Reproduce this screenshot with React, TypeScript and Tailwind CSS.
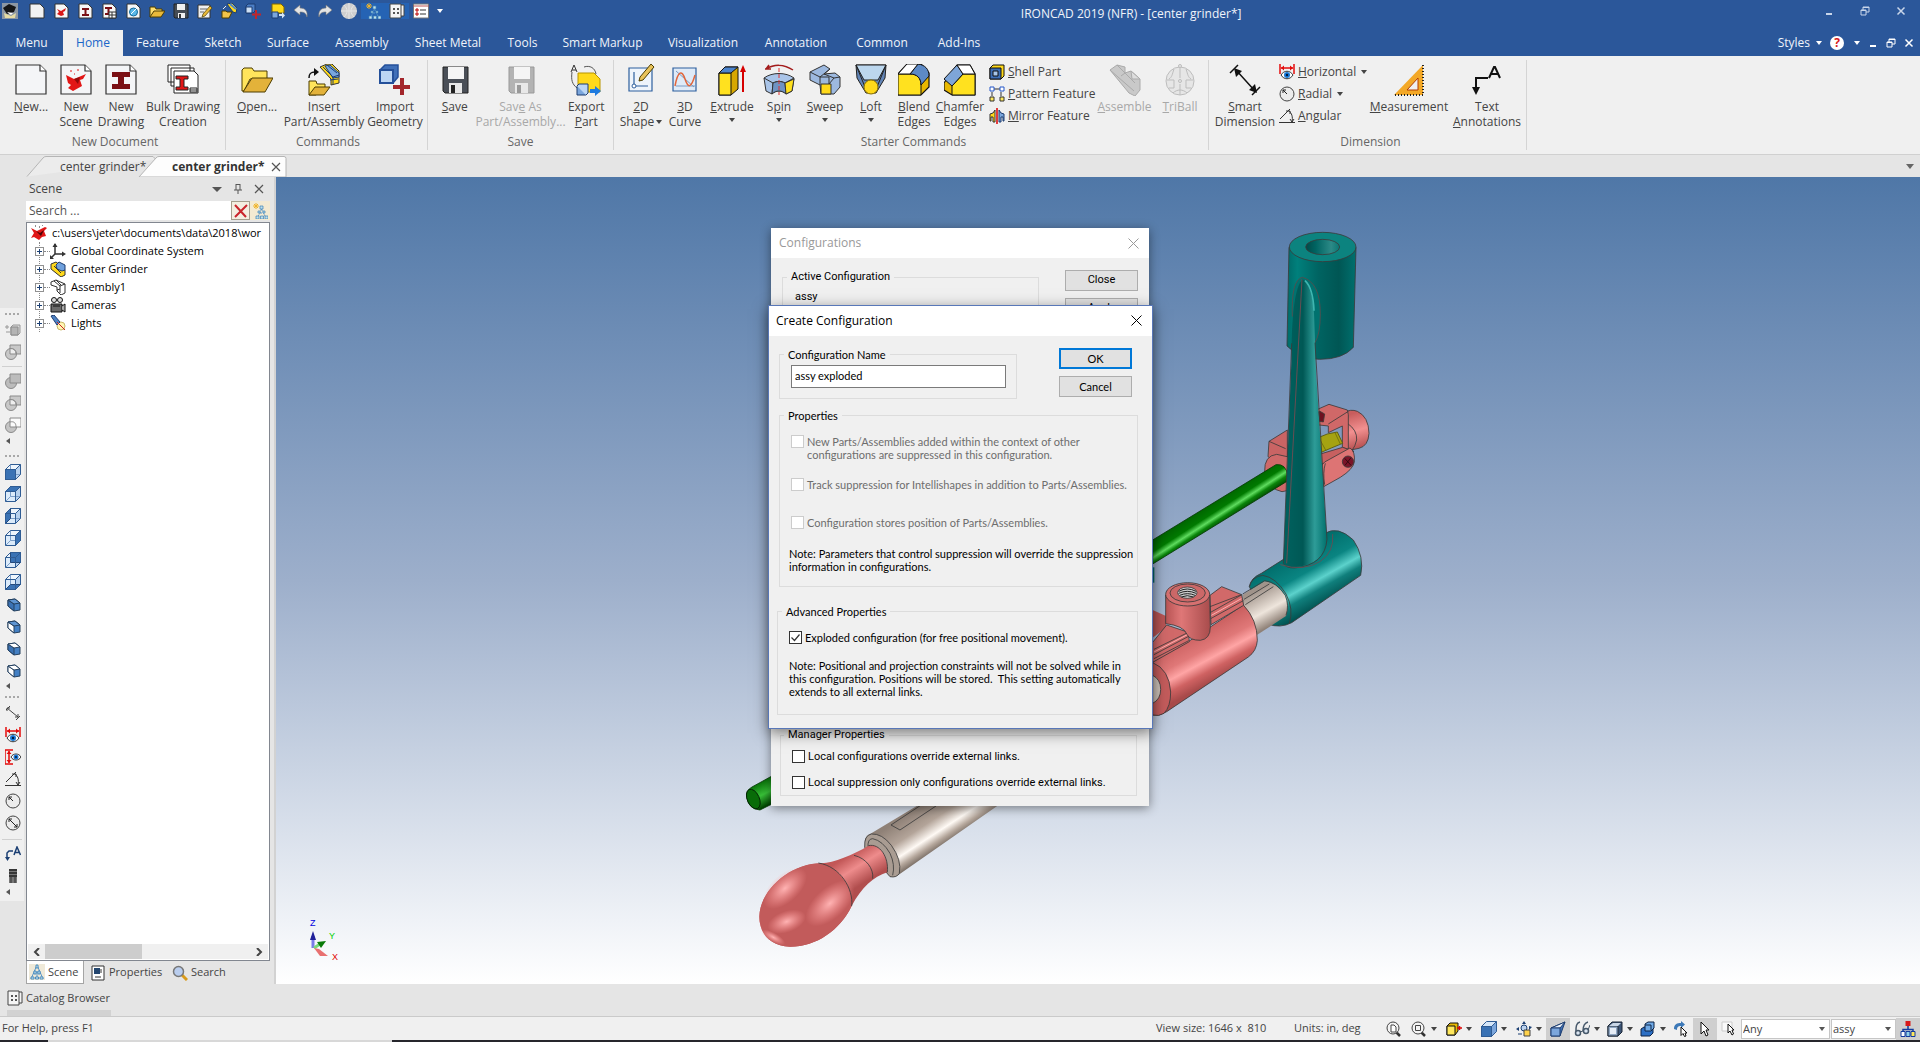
import { useState } from 'react';
import type { ReactNode } from 'react';
import { clsx } from 'clsx';

type IconProps = { children: ReactNode; box?: number; className?: string };

function Svg({ children, box = 16, className = 'size-4' }: IconProps) {
  return (
    <svg viewBox={`0 0 ${box} ${box}`} className={clsx('shrink-0', className)} aria-hidden="true">
      {children}
    </svg>
  );
}

function Caret({ className = 'text-[#444]' }: { className?: string }) {
  return (
    <svg viewBox="0 0 6 4" className={clsx('h-1 w-1.5 shrink-0', className)} aria-hidden="true">
      <path d="M0 0h6L3 4z" fill="currentColor" />
    </svg>
  );
}

/* ---------- small 16px glyphs ---------- */

const page = <path d="M2 1h9l4 4v10H2z" fill="#f7f7f7" stroke="#333" />;

const glyphs: Record<string, ReactNode> = {
  app: (
    <>
      <path d="M0 0h16v16H0z" fill="#8d97a3" />
      <path d="M1 5l6-4 7 3-2 5-7 2z" fill="#151515" />
      <path d="M2 10l7 3 5-3-1 5H3z" fill="#e6dca4" />
      <path d="M5 9l6 1-2 2z" fill="#fff" />
    </>
  ),
  page: <path d="M1 1h10l4 4v10H1z" fill="#f2f2f2" stroke="#333" />,
  scene: (
    <>
      {page}
      <path d="M4 6l4 2 5-3-1 3-2 1 1 3-3 1-4-2 2-2z" fill="#d81818" />
    </>
  ),
  drawing: (
    <>
      {page}
      <path d="M5 5h7v2H9.500v4H12v2H5v-2h2.500V7H5z" fill="#7b1015" />
    </>
  ),
  drawings: (
    <>
      {page}
      <path d="M4 4h7v2H8.500v4H11v2H4v-2h2.500V6H4z" fill="#7b1015" />
      <path d="M8 9h7v6H8z" fill="#fff" stroke="#333" />
      <path d="M8 12h7M11 9v6" stroke="#333" />
    </>
  ),
  globe: (
    <>
      {page}
      <circle cx="8.500" cy="9" r="4" fill="#5bb8e8" stroke="#14699b" />
      <path d="M6 11l6-6" stroke="#fff" />
    </>
  ),
  folder: (
    <>
      <path d="M1 4h5l1 2h6v3H5l-3 5H1z" fill="#ffe070" stroke="#4d3d00" />
      <path d="M5 8h11l-4 6H1z" fill="#e9b93a" stroke="#4d3d00" />
    </>
  ),
  disk: (
    <>
      <path d="M1 1h14v14H2l-1-1z" fill="#454c55" stroke="#222" />
      <path d="M4 1h8v6H4zM5 10h7v5H5z" fill="#f0f0f0" />
      <path d="M6 11h2v4H6z" fill="#333" />
    </>
  ),
  edit: (
    <>
      <path d="M1 2h12v13H1z" fill="#f0f0f0" stroke="#333" />
      <path d="M3 6h7M3 9h4" stroke="#666" />
      <path d="M6 11l7-8 2 2-7 8-3 1z" fill="#e9b93a" stroke="#4d3d00" strokeWidth=".7" />
    </>
  ),
  insert: (
    <>
      <path d="M6 1l5-1 5 5-1 5-3-1z" fill="#ffd91a" stroke="#1d3d70" />
      <path d="M9 1l6 5" stroke="#4c84cc" strokeWidth="2" />
      <path d="M1 8h4l1 1h5l-3 6H1z" fill="#f2c44a" stroke="#4d3d00" />
      <path d="M2 6l3-3" stroke="#eee" />
    </>
  ),
  import: (
    <>
      <path d="M1 3l2-2h7v7l-2 2H1z" fill="#4c7fc6" stroke="#1d3d70" />
      <path d="M1 4h6v6H1z" fill="#cfe0f5" stroke="#1d3d70" />
      <path d="M11 7v9M7 11.500h9" stroke="#c0272d" strokeWidth="2" />
    </>
  ),
  export: (
    <>
      <path d="M3 1h9l3 3v6H3z" fill="#ffd91a" stroke="#806600" />
      <path d="M3 9h6v6H3z" fill="#7ba6dc" stroke="#1d3d70" />
      <path d="M10 11h3V9l3 3.500-3 3V13h-3z" fill="#d5e4f7" />
    </>
  ),
  undo: <path d="M7 2L1 7l6 5V9c4 0 6 1 7 5 1-6-2-9-7-9z" fill="#e4e4e4" stroke="#777" strokeWidth=".6" />,
  redo: <path d="M9 2l6 5-6 5V9c-4 0-6 1-7 5-1-6 2-9 7-9z" fill="#e4e4e4" stroke="#777" strokeWidth=".6" />,
  ball: (
    <>
      <circle cx="8" cy="8" r="8" fill="#cfcfcf" />
      <path d="M8 0v16M0 8h16M3 2c4 4 4 8 0 12M13 2c-4 4-4 8 0 12" stroke="#e6e6e6" fill="none" />
    </>
  ),
  tree: (
    <>
      <path d="M4 0v6M1 3h6M2 1l4 4M6 1L2 5" stroke="#f0b429" />
      <path d="M9.500 6L6 14M9.500 6l4 8M8 10h4" stroke="#5a97c8" fill="none" strokeDasharray="2 1" />
      <path d="M8 3h3v3H8zM6 8h2v2H6zM11 8h2v2h-2zM4 13h3v3H4zM8.500 13h3v3h-3zM13 13h3v3h-3z" fill="#bfe0ea" stroke="#3d81b8" strokeWidth=".7" />
    </>
  ),
  pyramid: (
    <>
      <path d="M8 1L2 15M8 1l6 14M5 8h6M8 8v7" stroke="#5a97c8" fill="none" />
      <path d="M7 1h2v3H7zM5 7h2v3H5zM9 7h2v3H9zM2 13h3v2H2zM6.500 13h3v2h-3zM11 13h3v2h-3z" fill="#d6ebef" stroke="#2f79b5" strokeWidth=".8" />
    </>
  ),
  catalog: (
    <>
      <path d="M1 1h11v14H1zM12 2h3v11h-3" fill="#f5f5f5" stroke="#444" />
      <path d="M4 5h2v2H4zM8 5h2v2H8zM4 9h2v2H4zM8 9h2v2H8z" fill="#555" />
    </>
  ),
  list: (
    <>
      <path d="M.5 1h15v14H.5z" fill="#fff" stroke="#777" />
      <path d="M.5 3h15" stroke="#b55" />
      <path d="M3 6h2v2H3zM3 10h2v2H3z" fill="none" stroke="#b00" />
      <path d="M7 7h6M7 11h6" stroke="#333" />
    </>
  ),
  shell: (
    <>
      <path d="M1 4l3-3h11v11l-3 3H1z" fill="#ffd91a" stroke="#111" />
      <path d="M1 4h11v11H1z" fill="#3d6eb4" stroke="#111" />
      <path d="M4 7h5v5H4z" fill="#a9c7ea" stroke="#111" />
    </>
  ),
  pattern: (
    <>
      <path d="M5 3h6M3 6v4M12 6v4" stroke="#333" />
      <path d="M1 1h4v4H1zM11 1h4v4h-4z" fill="#fff" stroke="#2456c8" />
      <path d="M1 11h4v4H1zM11 11h4v4h-4z" fill="#ffe85c" stroke="#333" />
    </>
  ),
  mirror: (
    <>
      <path d="M6 2v12H4V9H2v4H1V6l3-1z" fill="#ffd91a" stroke="#333" />
      <path d="M10 2v12h2V9h2v4h1V6l-3-1z" fill="#7ba6dc" stroke="#1d3d70" />
      <path d="M8 0v16" stroke="#d00" strokeWidth="1.500" />
    </>
  ),
  horizontal: (
    <>
      <path d="M1 0v10M15 0v10M2 4h12" stroke="#e30b0b" strokeWidth="1.500" />
      <path d="M5 1.500L2 4l3 2.500zM11 1.500L14 4l-3 2.500z" fill="#e30b0b" />
      <path d="M2 11c3-5 9-5 12 0-3 5-9 5-12 0z" fill="#fff" stroke="#333" />
      <circle cx="8" cy="11" r="3" fill="#1979d6" />
      <circle cx="8" cy="11" r="1.200" fill="#001a3c" />
    </>
  ),
  vertical: (
    <>
      <path d="M0 1h8M0 15h8M4 2v12M0 1v14" stroke="#e30b0b" strokeWidth="1.500" />
      <path d="M1.500 5L4 2l2.500 3zM1.500 11L4 14l2.500-3z" fill="#e30b0b" />
      <path d="M6 8c2-4 8-4 10 0-2 4-8 4-10 0z" fill="#fff" stroke="#333" />
      <circle cx="11" cy="8" r="2.500" fill="#1979d6" />
      <circle cx="11" cy="8" r="1" fill="#001a3c" />
    </>
  ),
  radial: (
    <>
      <circle cx="8" cy="8" r="7" fill="#ececec" stroke="#444" />
      <path d="M8 8L4 4m0 3V4h3" stroke="#222" fill="none" />
    </>
  ),
  diameter: (
    <>
      <circle cx="8" cy="8" r="7" fill="#ececec" stroke="#444" />
      <path d="M4 4l8 8M4 7V4h3M12 9v3H9" stroke="#222" fill="none" />
    </>
  ),
  angular: <path d="M0 14.500h16M1 11L11 1M9 2c4 3 5 7 4 12M7 3h4v3M11 11l2 3 2-3" stroke="#333" fill="none" />,
  smart: <path d="M2 3l11 9M1 5l4-4M11 15l4-4M2 6V3h3M13 9v3h-3" stroke="#444" fill="none" />,
  textNote: (
    <>
      <path d="M2 12V7l2-2h4" stroke="#1b3f73" strokeWidth="1.500" fill="none" />
      <path d="M0 11h5l-2.500 4z" fill="#1b3f73" />
      <path d="M9 9l3-8 3.500 8M10.500 6.500h4" stroke="#1b3f73" strokeWidth="1.500" fill="none" />
    </>
  ),
  bolt: (
    <>
      <path d="M4 1h8v14H4z" fill="#777" />
      <path d="M4 2h8M4 5h8M4 8h8" stroke="#222" strokeWidth="1.500" />
      <path d="M6 9v6M10 9v6" stroke="#333" />
    </>
  ),
  sizeBox: (
    <>
      <path d="M0 5h4M2 3v4M1 10h4" stroke="#999" />
      <path d="M6 5l2-2h7v8l-2 2H6z" fill="#d8d8d8" stroke="#999" />
      <path d="M6 5h7v8H6z" fill="#b4b4b4" stroke="#8a8a8a" />
    </>
  ),
  union: (
    <>
      <circle cx="6" cy="10" r="5.500" fill="#bcbcbc" stroke="#8a8a8a" />
      <path d="M5 1h11v9H5z" fill="#bcbcbc" stroke="#8a8a8a" />
    </>
  ),
  subtract: (
    <>
      <path d="M5 1h11v9H5z" fill="#c8c8c8" stroke="#8a8a8a" />
      <circle cx="6" cy="10" r="5.500" fill="#c8c8c8" stroke="#8a8a8a" />
      <path d="M5 4.500q6 0 6 5.500H5z" fill="#eee" stroke="#8a8a8a" />
    </>
  ),
  intersect: (
    <>
      <circle cx="6" cy="10" r="5.500" fill="#c4c4c4" stroke="#8a8a8a" />
      <path d="M5 1h11v9H5z" fill="#fbfbfb" stroke="#8a8a8a" />
      <path d="M5 5c4-1 6 1 6 5" fill="none" stroke="#8a8a8a" />
    </>
  ),
  root: (
    <>
      <path d="M0 3l6 3 8-4 2 1-3 3 2 5-4 1-3 3-5-3-3 1 3-5z" fill="#e01616" />
      <path d="M5 6l4 2 4-3-3 6z" fill="#4b0404" />
      <path d="M4 1h1M11 0h1M8 2h1" stroke="#222" />
    </>
  ),
  axes: (
    <>
      <path d="M5 1v10h9M5 11l-4 4" stroke="#333" strokeWidth="1.500" fill="none" />
      <path d="M2.500 4L5 0l2.500 4zM12 8.500l4 2.500-4 2.500zM0 12v4h4z" fill="#333" />
    </>
  ),
  asmColor: (
    <>
      <path d="M1 3l5-2 4 3v3l5 2v5l-4 2-10-8z" fill="#ffd91a" stroke="#333" />
      <path d="M6 4l3-3 6 3v5l-3 1-5-2z" fill="#6fa0dd" stroke="#1d3d70" />
      <path d="M4 5l7 7" stroke="#333" />
    </>
  ),
  asm: (
    <>
      <path d="M1 3l5-2 9 4v9l-4 2-4-4V8L1 6z" fill="#fff" stroke="#333" />
      <path d="M4 2l6 5v7M6 1l5 5M10 7l5-2M7 11l3-1" fill="none" stroke="#333" />
    </>
  ),
  camera: (
    <>
      <circle cx="4" cy="3" r="2.500" fill="#ddd" stroke="#111" />
      <circle cx="10" cy="3" r="2.500" fill="#ddd" stroke="#111" />
      <path d="M1 7h11v8H1z" fill="#6a6a6a" stroke="#111" />
      <path d="M3 9h7M12 9l3-2v8l-3-2" stroke="#111" fill="#aaa" />
    </>
  ),
  light: (
    <>
      <circle cx="11" cy="11" r="4" fill="#fff6b3" stroke="#c9b96a" />
      <path d="M1 1l3-1 6 7-3 3z" fill="#4f83c4" stroke="#1d3d70" />
      <path d="M7 7l8 8" stroke="#c22" />
    </>
  ),
  props: (
    <>
      <path d="M2 1h12v14H2z" fill="#fff" stroke="#333" />
      <path d="M4 3h6v6H4z" fill="#24466f" />
      <path d="M5 12h6M11 4v4" stroke="#333" />
    </>
  ),
  search: (
    <>
      <path d="M10 10l5 5" stroke="#d89a1c" strokeWidth="3" />
      <circle cx="6.500" cy="6.500" r="5" fill="#b9cdee" stroke="#777" strokeWidth="1.500" />
    </>
  ),
  zoomPage: (
    <>
      <path d="M10 11l4 4" stroke="#333" strokeWidth="2.500" />
      <circle cx="7" cy="7" r="6" fill="#f4f4f4" stroke="#444" />
      <path d="M5 4h3l2 2v5H5z" fill="#fff" stroke="#444" />
    </>
  ),
  zoomBox: (
    <>
      <path d="M10 11l4 4" stroke="#333" strokeWidth="2.500" />
      <circle cx="7" cy="7" r="6" fill="#f4f4f4" stroke="#444" />
      <path d="M4.500 4.500h5v5h-5z" fill="none" stroke="#444" />
    </>
  ),
  yellowCube: (
    <>
      <path d="M1 5l3-3h8v8l-3 4H1z" fill="#e6b800" stroke="#111" />
      <path d="M1 5h8v9H1z" fill="#ffe85c" stroke="#111" />
      <path d="M11 7h5M13.500 5v4" stroke="#d00" strokeWidth="1.500" />
    </>
  ),
  rotate: (
    <>
      <path d="M8 0l2 3H6zM0 8l3-2v4zM16 6l-3-1v4z" fill="#1b3f73" />
      <circle cx="8" cy="7" r="3" fill="#bcd3ef" stroke="#1b3f73" />
      <path d="M8 9h6v6H8z" fill="#ffd24a" stroke="#444" />
      <path d="M2 13h4" stroke="#1b3f73" />
    </>
  ),
  wedge: (
    <>
      <path d="M1 7L15 1l-5 14H1z" fill="#3d6eb4" stroke="#1d3d70" />
      <path d="M1 7L15 1l-5 6z" fill="#eef4fb" stroke="#1d3d70" />
      <path d="M1 7h9v8H1z" fill="#7ba6dc" stroke="#1d3d70" />
    </>
  ),
  glasses: (
    <>
      <path d="M6 1C2 2 2 6 2 10M14 1c-4 1-5 5-5 9" stroke="#47596b" strokeWidth="1.500" fill="none" />
      <circle cx="4" cy="12" r="2.500" fill="#dbe6f2" stroke="#47596b" strokeWidth="1.500" />
      <circle cx="12" cy="10" r="2.500" fill="#dbe6f2" stroke="#47596b" strokeWidth="1.500" />
      <path d="M6 11l3-1M14 9l2-5" stroke="#47596b" />
    </>
  ),
  wire: (
    <>
      <path d="M1 5l4-4h10v10l-4 4H1z" fill="#3c5576" stroke="#1b2636" />
      <path d="M1 5h10v10H1z" fill="#8fa6c2" stroke="#1b2636" />
      <path d="M3 7h6v6H3z" fill="#e6edf6" />
      <path d="M2 5l4-3h8l-3 3z" fill="#c9d6e6" />
    </>
  ),
  stack: (
    <>
      <path d="M1 8l3-2h9v6l-3 3H1z" fill="#2c6fc4" stroke="#0d2244" />
      <path d="M5 3l3-2h6v6l-3 3H5z" fill="#6fa9e6" stroke="#0d2244" />
      <path d="M5 4h6v5" fill="none" stroke="#0d2244" />
    </>
  ),
  cursor: <path d="M4 1l8 8H9l2 5-2 1-2-5-3 3z" fill="#fff" stroke="#111" />,
  cursorBox: (
    <>
      <path d="M1 1h10v9H1z" fill="#fafafa" stroke="#ccc" />
      <path d="M7 3l6 6h-2l1.500 4-1.500 1-2-4-2 2z" fill="#fff" stroke="#111" />
    </>
  ),
  cursorArrow: (
    <>
      <path d="M1 8c0-5 3-6 7-6V0l4 3.500L8 7V5C5 5 4 6 4 9z" fill="#3d79b8" />
      <path d="M8 6l6 6h-2l1 3-1.500.5-1.500-3-2 2z" fill="#fff" stroke="#111" />
    </>
  ),
  org: (
    <>
      <path d="M8 5v4M3 11V8.500h10V11" stroke="#123b9e" fill="none" strokeWidth="1.500" />
      <path d="M5.500 0h5v5h-5z" fill="#d81818" />
      <path d="M1 10.500h4v5H1z" fill="#fff" stroke="#123b9e" />
      <path d="M11 10.500h4v5h-4z" fill="#ffe85c" stroke="#123b9e" />
      <path d="M6 10.500h4v5H6z" fill="#8fd0e8" stroke="#123b9e" />
    </>
  ),
};

function Glyph({ name, className }: { name: string; className?: string }) {
  return <Svg className={className}>{glyphs[name]}</Svg>;
}

/* Orientation cube: a glass box with one face filled. */
const faces = {
  front: 'M.5 5.500h10v10H.5z',
  back: 'M5.500.5h10v10h-10z',
  top: 'M.5 5.500l5-5h10l-5 5z',
  bottom: 'M.5 15.500l5-5h10l-5 5z',
  left: 'M.5 5.500l5-5v10l-5 5z',
  right: 'M10.500 5.500l5-5v10l-5 5z',
};

function ViewCube({ face, solid }: { face: keyof typeof faces; solid?: boolean }) {
  return (
    <Svg>
      <path d={faces.front} fill="#dcebfa" />
      <path d={faces.top} fill={solid ? '#d5e6f8' : '#eef5fc'} />
      <path d={faces.right} fill={solid ? '#7ba6dc' : '#b7d1ee'} />
      {!solid && <path d="M5.500.5v10h10M5.500 10.500l-5 5" stroke="#7c9fc9" fill="none" />}
      <path d={faces[face]} fill="#3a72b4" stroke="#24497a" />
      <path d="M.5 5.500h10v10H.5zM.5 5.500l5-5h10v10l-5 5M10.500 5.500l5-5" fill="none" stroke="#2f5c94" />
    </Svg>
  );
}

function IsoCube({ left = '#3a72b4', top = '#5f95d2' }) {
  return (
    <Svg>
      <path d="M3 4l7-1 5 4v7l-6 1-6-5z" fill="#4480c4" stroke="#24405f" />
      <path d="M3 4l6 4v7l-6-5z" fill={left} stroke="#24405f" />
      <path d="M3 4l7-1 5 4-6 1z" fill={top} stroke="#24405f" />
    </Svg>
  );
}

/* ---------- ribbon art, 32px ---------- */

const sheet = <path d="M1 1h24l6 6v23H1z" fill="#f4f5f7" stroke="#333" strokeWidth="1.200" />;
const fold = <path d="M25 1v6h6" fill="#fff" stroke="#333" strokeWidth="1.200" />;
const disk = (body: string, ink: string) => (
  <>
    <path d="M4 3h25v26H6l-2-2z" fill={body} stroke={ink} />
    <path d="M9 3h16v12H9z" fill="#f5f5f5" />
    <path d="M10 19h13v10H10z" fill="#e8e8e8" />
    <path d="M12 21h4v8h-4z" fill={ink} />
  </>
);

const art: Record<string, ReactNode> = {
  new: (
    <>
      {sheet}
      {fold}
    </>
  ),
  scene: (
    <>
      {sheet}
      {fold}
      <path d="M6 11l8 4 12-5-3 5-3 1 2 6-9 5-5-3 3-3-3-2z" fill="#e21616" />
      <path d="M14 15l6-2-2 7z" fill="#8f0a0a" />
      <path d="M10 7h2M17 6h2M14 10h1" stroke="#e21616" />
    </>
  ),
  drawing: (
    <>
      {sheet}
      {fold}
      <path d="M7 8h18v5h-6v7h6v5H7v-5h6v-7H7z" fill="#7b1015" />
    </>
  ),
  bulk: (
    <>
      <path d="M1 1h22v17H1zM4 4h23v18H4z" fill="#fff" stroke="#222" />
      <path d="M7 7h20l4 4v18H7z" fill="#fff" stroke="#222" />
      <path d="M9 12h12v3h-4v8h4v3H9v-3h4v-8H9z" fill="#e21616" stroke="#222" />
      <path d="M23 24h7v4h-7zM23 26h7" stroke="#222" fill="#fff" />
    </>
  ),
  open: (
    <>
      <path d="M1 8V6l2-2h8l2 3h13v8H9L3 27H1z" fill="#ffe45c" stroke="#4d3d00" />
      <path d="M11 14h21l-8 14H2z" fill="#e3b23a" stroke="#4d3d00" />
    </>
  ),
  insert: (
    <>
      <path d="M12 3l7-3h5l7 7v12l-8 2v-6z" fill="#ffd91a" stroke="#333" />
      <path d="M17 2l5-1 9 8v4l-6 1z" fill="#78a6de" stroke="#1d3d70" />
      <path d="M15 3l10 10v7M19 1l10 8M25 13l6-2M22 16l8-1" stroke="#1d3d70" fill="none" />
      <path d="M1 14c0-5 2-6 6-6" stroke="#111" strokeWidth="1.500" fill="none" />
      <path d="M6 4l5 4-5 4z" fill="#111" />
      <path d="M1 17h7l1 3h8v3L8 31H1z" fill="#ffe45c" stroke="#4d3d00" />
      <path d="M7 23h15l-6 8H1z" fill="#e3b23a" stroke="#4d3d00" />
    </>
  ),
  import: (
    <>
      <path d="M1 6l5-5h13v12l-5 6H1z" fill="#3f6fb8" stroke="#24509a" strokeWidth="1.500" />
      <path d="M1 6h13v13H1z" fill="#bcd6f4" stroke="#24509a" strokeWidth="2" />
      <path d="M23 14v17M14 23h17" stroke="#a3262b" strokeWidth="4" />
    </>
  ),
  save: disk('#4a4f57', '#222'),
  saveAs: disk('#b3b3b3', '#999'),
  export: (
    <>
      <path d="M8 9h16l6 6v13H8z" fill="#ffd91a" stroke="#b89500" />
      <path d="M2 8c-1 8 0 12 5 16M14 3c6-2 11 1 12 7" fill="none" stroke="#555" />
      <path d="M1 8l3-7 3 7M2 6h4" fill="none" stroke="#333" />
      <path d="M7 22h9v9H7z" fill="#7ba6dc" stroke="#1d3d70" />
      <path d="M7 22l2-2h9v9l-2 2" fill="#bcd6f4" stroke="#1d3d70" />
      <path d="M20 25h5v-3l6 5-6 5v-3h-5z" fill="#1e7be0" />
    </>
  ),
  shape2d: (
    <>
      <path d="M4 4h23v23H4z" fill="#eef4fb" stroke="#2d5f9e" strokeWidth="1.200" />
      <path d="M9 8v14h14" stroke="#2d5f9e" fill="none" strokeWidth="1.200" />
      <circle cx="9" cy="22" r="2" fill="#fff" stroke="#2d5f9e" />
      <path d="M15 13L26 0l3 3-11 13-4 1z" fill="#e9c35a" stroke="#4d3d00" />
    </>
  ),
  curve3d: (
    <>
      <path d="M4 4h23v23H4z" fill="#dfeaf7" stroke="#2d5f9e" strokeWidth="1.200" />
      <path d="M7 22h20M7 7l18 16" stroke="#7a9cc4" fill="none" />
      <path d="M6 22C9 6 13 6 16 15s6 10 10-4" stroke="#e2653a" strokeWidth="1.500" fill="none" />
    </>
  ),
  extrude: (
    <>
      <path d="M3 9l6-6h13v22l-7 6H3z" fill="#d8a800" stroke="#111" />
      <path d="M3 9h12v22H3z" fill="#ffe11f" stroke="#111" />
      <path d="M3 9l6-6h13l-7 6z" fill="#4c84cc" stroke="#111" />
      <path d="M27 7v21" stroke="#d60000" strokeWidth="2" />
      <path d="M24 8l3-7 3 7z" fill="#d60000" />
    </>
  ),
  spin: (
    <>
      <path d="M3 5c8-5 18-5 27 1M2 5h6M3 5l3-4" stroke="#a31c1c" strokeWidth="1.500" fill="none" />
      <path d="M1 14c8-6 22-6 30 0l-2 13-6 3c-4-4-10-4-14 0l-6-3z" fill="#a9c4e8" stroke="#333" />
      <path d="M1 14l9 5c4-2 8-2 12 0l9-5M10 19l-1 11" fill="none" stroke="#333" />
      <path d="M10 19c4-2 8-2 12 0l1 11c-4-4-10-4-14 0z" fill="#6f93c4" stroke="#333" />
      <path d="M22 19l9-4-2 12-6 3z" fill="#ffe11f" stroke="#333" />
      <path d="M16 4v27" stroke="#d33" strokeDasharray="4 2" />
    </>
  ),
  sweep: (
    <>
      <path d="M1 8L15 1l6 4-6 5 11-1 5 4v10l-6 7H12l-1-9-10-5z" fill="#9db9df" stroke="#333" />
      <path d="M1 8l10 5 10-8M11 13v8M15 10l10 4 6-1M11 13h9v7M25 14l-5 6" fill="none" stroke="#333" />
      <path d="M12 20h10v10H12z" fill="#ffd91a" stroke="#333" />
    </>
  ),
  loft: (
    <>
      <path d="M1 1h30l-1 13-9 15H11L2 14z" fill="#6285b7" stroke="#222" />
      <path d="M1 1h30l-8 15H9z" fill="#bcd7ee" stroke="#222" />
      <path d="M1 1l9 22M31 1l-9 22" stroke="#222" />
      <circle cx="16" cy="23" r="7" fill="#ffd91a" stroke="#8a7000" />
    </>
  ),
  blend: (
    <>
      <path d="M0 10L9 0h14l8 9v14l-8 8H0z" fill="#e8b800" stroke="#111" strokeWidth="1.200" />
      <path d="M0 10h12c7 0 11 4 11 11v10H0z" fill="#ffe11f" stroke="#111" />
      <path d="M12 10L20 0c7 1 11 5 11 12l-8 9c0-7-4-11-11-11z" fill="#5d8ac6" stroke="#111" />
      <path d="M0 10L9 0h11l-8 10z" fill="#fff" stroke="#111" />
    </>
  ),
  chamfer: (
    <>
      <path d="M0 19L13 1h13l5 9v21H8L0 26z" fill="#e8b800" stroke="#111" strokeWidth="1.200" />
      <path d="M8 22l11-12h12v21H8z" fill="#ffe11f" stroke="#111" />
      <path d="M0 15L13 1l6 9L8 22z" fill="#7ea5d8" stroke="#111" />
      <path d="M13 1h13l5 9H19z" fill="#fff" stroke="#111" />
    </>
  ),
  assemble: (
    <g fill="#c9c9c9" stroke="#aaa">
      <path d="M1 6l7-5 8 2 0 6 6-2 9 8v11l-5 6-6-3z" />
      <path d="M8 1l18 18M1 6l24 21M16 9l-4 3M22 7l9 8h-8z" fill="#ddd" />
    </g>
  ),
  triball: (
    <g fill="#e6e6e6" stroke="#bdbdbd">
      <circle cx="16" cy="17" r="14" />
      <path d="M16 3v11M16 20v11M10 5c-2 6-2 8-5 10M22 5c2 6 2 8 5 10M3 16h7v8H5M29 16h-7v8h5M9 29c4-4 10-4 14 0" />
      <circle cx="16" cy="17" r="1.500" />
      <circle cx="16" cy="2" r="1.500" />
    </g>
  ),
  smart: (
    <>
      <path d="M7 6l19 21M1 9l8-8M23 31l8-8" stroke="#111" strokeWidth="1.500" />
      <path d="M5 4l8 3-6 6zM28 29l-8-3 6-6z" fill="#111" />
    </>
  ),
  measure: (
    <>
      <path d="M30 1v30H1z" fill="#f3a827" />
      <path d="M25 14v12H14z" fill="#f0f0f0" stroke="#b33d00" />
      <path d="M30 1v30H1" stroke="#222" strokeWidth="2" strokeDasharray="1 2" fill="none" />
    </>
  ),
  textNote: (
    <>
      <path d="M5 24V14h12" stroke="#111" strokeWidth="2" fill="none" />
      <path d="M1 23h8l-4 8z" fill="#111" />
      <path d="M18 14l5-11h1l5 11M20 10h7" stroke="#111" strokeWidth="2" fill="none" />
    </>
  ),
};

/* ---------- ribbon ---------- */

type Tool = {
  icon: string;
  width: string;
  lines: ReactNode[];
  disabled?: boolean;
  menu?: boolean;
};

function RibbonButton({ tool }: { tool: Tool }) {
  return (
    <button
      disabled={tool.disabled}
      className={clsx(
        'flex flex-col items-center self-start pt-1 text-center leading-[15px] whitespace-nowrap',
        tool.width,
        tool.disabled ? 'text-[#a8a8a8]' : 'text-[#444]',
      )}
    >
      <Svg box={32} className="mb-[3px] size-8">
        {art[tool.icon]}
      </Svg>
      {tool.lines.map((line, i) => (
        <span key={i} className="flex items-center gap-0.5">
          {line}
        </span>
      ))}
      {tool.menu && (
        <span className="flex h-3 items-center">
          <Caret />
        </span>
      )}
    </button>
  );
}

function RibbonGroup({ label, className, children }: { label: string; className?: string; children: ReactNode }) {
  return (
    <section className={clsx('my-1 flex flex-col border-r border-[#d4d4d4]', className)}>
      <div className="flex flex-1">{children}</div>
      <h2 className="text-center leading-4 text-[#666]">{label}</h2>
    </section>
  );
}

function SmallTool({ icon, menu, children }: { icon: string; menu?: boolean; children: ReactNode }) {
  return (
    <button className="flex h-[22px] items-center gap-[3px] whitespace-nowrap text-[#444]">
      <Glyph name={icon} />
      <span>{children}</span>
      {menu && <Caret className="ml-0.5 text-[#444]" />}
    </button>
  );
}

const documentTools: Tool[] = [
  { icon: 'new', width: 'w-[46px]', lines: [<span><u>N</u>ew...</span>] },
  { icon: 'scene', width: 'w-11', lines: ['New', 'Scene'] },
  { icon: 'drawing', width: 'w-[46px]', lines: ['New', 'Drawing'] },
  { icon: 'bulk', width: 'w-[78px]', lines: ['Bulk Drawing', 'Creation'] },
];

const commandTools: Tool[] = [
  { icon: 'open', width: 'w-[54px]', lines: [<span><u>O</u>pen...</span>] },
  { icon: 'insert', width: 'w-20', lines: ['Insert', 'Part/Assembly'] },
  { icon: 'import', width: 'w-[62px]', lines: ['Import', 'Geometry'] },
];

const saveTools: Tool[] = [
  { icon: 'save', width: 'w-12', lines: [<span><u>S</u>ave</span>] },
  { icon: 'saveAs', width: 'w-[84px]', lines: [<span>Sav<u>e</u> As</span>, 'Part/Assembly...'], disabled: true },
  { icon: 'export', width: 'w-12', lines: ['Export', <span><u>P</u>art</span>] },
];

const starterTools: Tool[] = [
  { icon: 'shape2d', width: 'w-11', lines: [<span><u>2</u>D</span>, <>Shape<Caret /></>] },
  { icon: 'curve3d', width: 'w-11', lines: [<span><u>3</u>D</span>, 'Curve'] },
  { icon: 'extrude', width: 'w-[50px]', lines: [<span><u>E</u>xtrude</span>], menu: true },
  { icon: 'spin', width: 'w-11', lines: [<span>S<u>p</u>in</span>], menu: true },
  { icon: 'sweep', width: 'w-12', lines: [<span><u>S</u>weep</span>], menu: true },
  { icon: 'loft', width: 'w-11', lines: [<span><u>L</u>oft</span>], menu: true },
  { icon: 'blend', width: 'w-[42px]', lines: [<span><u>B</u>lend</span>, 'Edges'] },
  { icon: 'chamfer', width: 'w-[50px]', lines: [<span><u>C</u>hamfer</span>, 'Edges'] },
];

const quickTools = ['page', 'scene', 'drawing', 'drawings', 'globe', 'folder', 'disk', 'edit', 'insert', 'import', 'export', 'undo', 'redo', 'ball', 'tree', 'catalog', 'list'];

const tabs = [
  { name: 'Menu', width: 'w-[63px]' },
  { name: 'Home', width: 'w-[60px]' },
  { name: 'Feature', width: 'w-[69px]' },
  { name: 'Sketch', width: 'w-[62px]' },
  { name: 'Surface', width: 'w-[68px]' },
  { name: 'Assembly', width: 'w-[80px]' },
  { name: 'Sheet Metal', width: 'w-[92px]' },
  { name: 'Tools', width: 'w-[57px]' },
  { name: 'Smart Markup', width: 'w-[103px]' },
  { name: 'Visualization', width: 'w-[98px]' },
  { name: 'Annotation', width: 'w-[88px]' },
  { name: 'Common', width: 'w-[84px]' },
  { name: 'Add-Ins', width: 'w-[70px]' },
];

function WindowControls({ className }: { className?: string }) {
  return (
    <div className={clsx('flex items-center', className)}>
      <button aria-label="Minimize">
        <Svg box={10} className="size-2.5"><path d="M2 8h6" stroke="currentColor" strokeWidth="2" /></Svg>
      </button>
      <button aria-label="Restore">
        <Svg box={10} className="size-2.5">
          <path d="M1 4h5v5H1zM3 4V1h6v5H6M1 4.500h5M3 1.500h6" fill="none" stroke="currentColor" />
        </Svg>
      </button>
      <button aria-label="Close">
        <Svg box={10} className="size-2.5"><path d="M1.500 1.500l7 7M8.500 1.500l-7 7" stroke="currentColor" strokeWidth="1.500" /></Svg>
      </button>
    </div>
  );
}

function Header() {
  return (
    <header className="bg-[#2b579a] text-[#f0f4fa]">
      <div className="flex h-[30px] items-start">
        <div className="flex flex-[3] items-center pt-[3px]">
          <span className="flex w-[25px] pl-0.5"><Glyph name="app" /></span>
          {quickTools.map((name) => (
            <button key={name} aria-label={name} className={clsx('flex w-6 justify-center', (name === 'tree' || name === 'catalog') && 'bg-[#2563b4]')}>
              <Glyph name={name} />
            </button>
          ))}
          <Caret className="ml-1 text-white" />
        </div>
        <h1 className="pt-1.5 pl-6 leading-4">IRONCAD 2019 (NFR) - [center grinder*]</h1>
        <WindowControls className="flex-[2] justify-end gap-[26px] pt-1.5 pr-3.5 text-[#c9d6ea]" />
      </div>
      <div className="flex h-[26px] items-stretch">
        <nav className="flex flex-1">
          {tabs.map((tab) => (
            <button
              key={tab.name}
              className={clsx('shrink-0 whitespace-nowrap', tab.width, tab.name === 'Home' && 'bg-[#f0f0f0] text-[#1a66c8]')}
            >
              {tab.name}
            </button>
          ))}
        </nav>
        <div className="flex items-center gap-2 pr-1.5">
          <button className="flex items-center gap-1.5">Styles <Caret className="text-white" /></button>
          <button aria-label="Help" className="flex items-center gap-2.5">
            <span className="flex size-3.5 items-center justify-center rounded-full bg-white text-[12px] leading-3 font-bold text-[#d81818]">?</span>
            <Caret className="text-white" />
          </button>
          <WindowControls className="gap-2 text-white" />
        </div>
      </div>
    </header>
  );
}

function Ribbon() {
  return (
    <div className="flex h-[99px] shrink-0 border-b border-[#d0d0d0] bg-[#f0f0f0]">
      <RibbonGroup label="New Document" className="w-[226px] pr-[3px] pl-2">
        {documentTools.map((t) => <RibbonButton key={t.icon} tool={t} />)}
      </RibbonGroup>
      <RibbonGroup label="Commands" className="w-[202px] pr-px pl-1">
        {commandTools.map((t) => <RibbonButton key={t.icon} tool={t} />)}
      </RibbonGroup>
      <RibbonGroup label="Save" className="w-[186px] px-[3px]">
        {saveTools.map((t) => <RibbonButton key={t.icon} tool={t} />)}
      </RibbonGroup>
      <RibbonGroup label="Starter Commands" className="w-[595px] pl-[5px]">
        {starterTools.map((t) => <RibbonButton key={t.icon} tool={t} />)}
        <div className="flex w-[111px] flex-col pt-px pl-1">
          <SmallTool icon="shell"><u>S</u>hell Part</SmallTool>
          <SmallTool icon="pattern"><u>P</u>attern Feature</SmallTool>
          <SmallTool icon="mirror"><u>M</u>irror Feature</SmallTool>
        </div>
        <RibbonButton tool={{ icon: 'assemble', width: 'w-[57px]', lines: [<span><u>A</u>ssemble</span>], disabled: true }} />
        <RibbonButton tool={{ icon: 'triball', width: 'w-[54px]', lines: [<span><u>T</u>riBall</span>], disabled: true }} />
      </RibbonGroup>
      <RibbonGroup label="Dimension" className="w-[318px] pl-1.5">
        <RibbonButton tool={{ icon: 'smart', width: 'w-[60px]', lines: [<span><u>S</u>mart</span>, 'Dimension'] }} />
        <div className="flex w-[95px] flex-col pt-px pl-1">
          <SmallTool icon="horizontal" menu><u>H</u>orizontal</SmallTool>
          <SmallTool icon="radial" menu><u>R</u>adial</SmallTool>
          <SmallTool icon="angular"><u>A</u>ngular</SmallTool>
        </div>
        <RibbonButton tool={{ icon: 'measure', width: 'w-[78px]', lines: [<span><u>M</u>easurement</span>] }} />
        <RibbonButton tool={{ icon: 'textNote', width: 'w-[78px]', lines: ['Text', <span><u>A</u>nnotations</span>] }} />
      </RibbonGroup>
    </div>
  );
}

function DocumentTabs() {
  return (
    <div className="relative flex h-[22px] shrink-0 items-end bg-[#e5e5e5] text-[#444]">
      <svg viewBox="0 0 290 22" className="absolute top-0 left-0 h-[22px] w-[290px]" aria-hidden="true">
        <path d="M27 21.500L43 3q1-1.500 3-1.500h107l3 3" fill="#ececec" stroke="#b5b5b5" />
        <path d="M139 22l17-19q1-1.500 3-1.500h125q2 0 2 2V22z" fill="#fdfdfd" stroke="#b5b5b5" />
      </svg>
      <div className="relative flex flex-1 items-center pb-0.5 pl-[60px] leading-4">
        <button className="w-[80px] text-left whitespace-nowrap">center grinder*</button>
        <button className="ml-8 w-[92px] text-left font-bold whitespace-nowrap text-[#333]">center grinder*</button>
        <button aria-label="Close tab" className="ml-[7px]">
          <Svg box={10} className="size-2.5"><path d="M1 1l8 8M9 1L1 9" stroke="#555" strokeWidth="1.200" /></Svg>
        </button>
      </div>
      <button aria-label="Tab list" className="relative self-center pr-1.5 text-[#666]">
        <svg viewBox="0 0 8 5" className="h-[5px] w-2"><path d="M0 0h8L4 5z" fill="currentColor" /></svg>
      </button>
    </div>
  );
}

/* ---------- left side ---------- */

const Grip = () => (
  <div className="flex h-[11px] items-center justify-center gap-0.5">
    {[0, 1, 2, 3].map((i) => <span key={i} className="size-0.5 bg-[#a8a8a8]" />)}
  </div>
);

const Rule = () => <div className="mx-0.5 my-[3px] h-px bg-[#d0d0d0]" />;

const Collapse = () => (
  <div className="flex h-2.5 items-center pl-1.5">
    <svg viewBox="0 0 4 6" className="h-1.5 w-1"><path d="M4 0v6L0 3z" fill="#555" /></svg>
  </div>
);

function BarButton({ label, children }: { label: string; children: ReactNode }) {
  return (
    <button aria-label={label} className="flex h-[22px] items-center justify-center pl-0.5">
      {children}
    </button>
  );
}

const viewFaces: (keyof typeof faces)[] = ['front', 'top', 'left', 'right', 'back', 'bottom'];

function SideToolbar() {
  return (
    <aside className="w-[26px] shrink-0 bg-[#e5e5e5] pt-[131px]">
      <div className="flex w-6 flex-col bg-[#f0f0f0] pb-1">
        <Grip />
        <BarButton label="Size box"><Glyph name="sizeBox" /></BarButton>
        <BarButton label="Boolean"><Glyph name="subtract" /></BarButton>
        <Rule />
        {['union', 'subtract', 'intersect'].map((n) => <BarButton key={n} label={n}><Glyph name={n} /></BarButton>)}
        <Collapse />
        <div className="h-1" />
        <Grip />
        {viewFaces.map((f) => <BarButton key={f} label={f}><ViewCube face={f} /></BarButton>)}
        <BarButton label="Isometric 1"><IsoCube /></BarButton>
        <BarButton label="Isometric 2"><IsoCube left="#fff" /></BarButton>
        <BarButton label="Isometric 3"><IsoCube top="#fff" /></BarButton>
        <BarButton label="Isometric 4"><IsoCube left="#fff" top="#fff" /></BarButton>
        <Collapse />
        <Grip />
        {['smart', 'horizontal', 'vertical', 'angular', 'radial', 'diameter'].map((n) => (
          <BarButton key={n} label={n}><Glyph name={n} /></BarButton>
        ))}
        <div className="h-0.5" />
        <Rule />
        <BarButton label="Text note"><Glyph name="textNote" /></BarButton>
        <BarButton label="Bolt"><Glyph name="bolt" /></BarButton>
        <Collapse />
      </div>
    </aside>
  );
}

const nodes = [
  { icon: 'axes', name: 'Global Coordinate System' },
  { icon: 'asmColor', name: 'Center Grinder' },
  { icon: 'asm', name: 'Assembly1' },
  { icon: 'camera', name: 'Cameras' },
  { icon: 'light', name: 'Lights' },
];

function ScenePanel() {
  return (
    <section className="flex w-[250px] shrink-0 flex-col border-r-2 border-[#d2d2d2] bg-[#e5e5e5] pr-1 text-[11px] text-[#444]">
      <div className="flex h-6 items-center gap-[11px] pr-1.5 pl-[3px]">
        <h2 className="flex-1 text-[12px]">Scene</h2>
        <svg viewBox="0 0 10 5" className="h-[5px] w-2.5" aria-hidden="true"><path d="M0 0h10L5 5z" fill="#555" /></svg>
        <Svg box={10} className="size-2.5"><path d="M3 0v6M7 0v6M3 .5h4M1 6h8M5 6v4" stroke="#555" fill="none" /></Svg>
        <button aria-label="Close panel">
          <Svg box={10} className="size-2.5"><path d="M1 1l8 8M9 1L1 9" stroke="#555" strokeWidth="1.200" /></Svg>
        </button>
      </div>
      <div className="flex h-[21px] pb-0.5">
        <input aria-label="Search scene" placeholder="Search ..." className="min-w-0 flex-1 bg-white pl-[3px] text-[12px] outline-none placeholder:text-[#555]" />
        <button aria-label="Clear" className="flex w-[19px] items-center justify-center border border-[#a5a08e] bg-[#f3eee0]">
          <Svg box={14} className="size-3.5"><path d="M1 1l11 12M13 1L1 13" stroke="#c9252b" strokeWidth="2" /></Svg>
        </button>
        <button aria-label="Filter" className="flex w-5 items-center justify-center bg-[#f3ead2]"><Glyph name="tree" /></button>
      </div>
      <div className="flex min-h-0 flex-1 flex-col border border-[#828790] bg-white text-black">
        <div className="flex-1 overflow-hidden pt-px">
          <div className="flex h-[18px] items-center gap-[5px] pl-1 whitespace-nowrap">
            <Glyph name="root" />
            <span>c:\users\jeter\documents\data\2018\wor</span>
          </div>
          <ul className="ml-[12px] border-l border-dotted border-[#888]">
            {nodes.map((node) => (
              <li key={node.name} className="flex h-[18px] items-center whitespace-nowrap">
                <button aria-label={`Expand ${node.name}`} className="-ml-[5px] flex size-[9px] items-center justify-center border border-[#919191] bg-white">
                  <Svg box={5} className="size-[5px]"><path d="M0 2.500h5M2.500 0v5" stroke="#1b3f73" /></Svg>
                </button>
                <span className="w-1.5 border-t border-dotted border-[#888]" />
                <Glyph name={node.icon} />
                <span className="pl-[5px]">{node.name}</span>
              </li>
            ))}
          </ul>
        </div>
        <div className="m-px flex h-[15px] items-center bg-[#f0f0f0] px-[5px]">
          <Svg box={8} className="size-2"><path d="M6 0L2 4l4 4" stroke="#444" strokeWidth="2" fill="none" /></Svg>
          <div className="h-full flex-1 px-1"><div className="h-full w-[97px] bg-[#cdcdcd]" /></div>
          <Svg box={8} className="size-2"><path d="M2 0l4 4-4 4" stroke="#444" strokeWidth="2" fill="none" /></Svg>
        </div>
      </div>
      <div className="flex h-[23px] items-stretch">
        <button className="flex w-[58px] items-center gap-[3px] border border-t-0 border-[#a5a5a5] bg-white pl-0.5">
          <span className="flex bg-[#efe9d8]"><Glyph name="pyramid" /></span>Scene
        </button>
        <button className="flex w-[84px] items-center gap-[3px] pl-1.5"><Glyph name="props" />Properties</button>
        <button className="flex items-center gap-[3px] pl-1"><Glyph name="search" />Search</button>
      </div>
    </section>
  );
}

/* ---------- 3D view ---------- */

function Model() {
  return (
    <svg viewBox="276 177 1644 807" preserveAspectRatio="xMinYMin slice" className="absolute inset-0 size-full" aria-hidden="true">
      <defs>
        <linearGradient id="tealV" x1="0" x2="1" y1="0" y2="0">
          <stop offset="0" stopColor="#006a68" />
          <stop offset=".15" stopColor="#00807c" />
          <stop offset=".45" stopColor="#006462" />
          <stop offset=".75" stopColor="#005654" />
          <stop offset="1" stopColor="#00706e" />
        </linearGradient>
        <linearGradient id="bore" x1="0" x2="1" y1="0" y2="0">
          <stop offset="0" stopColor="#004a48" />
          <stop offset=".3" stopColor="#006462" />
          <stop offset=".75" stopColor="#2c8a87" />
          <stop offset="1" stopColor="#0a7572" />
        </linearGradient>
        <linearGradient id="tealArm" x1="0" x2="1" y1="0" y2="0">
          <stop offset="0" stopColor="#00625f" />
          <stop offset=".45" stopColor="#005855" />
          <stop offset=".72" stopColor="#2e9c98" />
          <stop offset="1" stopColor="#00706c" />
        </linearGradient>
        <linearGradient id="tealD" gradientUnits="userSpaceOnUse" x1="450" y1="1030" x2="540" y2="1190">
          <stop offset="0" stopColor="#006c6a" />
          <stop offset=".4" stopColor="#0a8582" />
          <stop offset=".6" stopColor="#5cd2cc" />
          <stop offset=".75" stopColor="#107f7c" />
          <stop offset="1" stopColor="#00504f" />
        </linearGradient>
        <linearGradient id="pinkD" gradientUnits="userSpaceOnUse" x1="150" y1="1270" x2="225" y2="1410">
          <stop offset="0" stopColor="#c85d5d" />
          <stop offset=".4" stopColor="#e07878" />
          <stop offset=".6" stopColor="#ffa5a5" />
          <stop offset=".8" stopColor="#cf6262" />
          <stop offset="1" stopColor="#a84a4a" />
        </linearGradient>
        <linearGradient id="pinkV" x1="0" x2="1" y1="0" y2="0">
          <stop offset="0" stopColor="#b95555" />
          <stop offset=".35" stopColor="#df7777" />
          <stop offset="1" stopColor="#a84c4c" />
        </linearGradient>
        <linearGradient id="pinkEnd" gradientUnits="userSpaceOnUse" x1="640" y1="610" x2="670" y2="710">
          <stop offset="0" stopColor="#c85d5d" />
          <stop offset=".5" stopColor="#f29090" />
          <stop offset="1" stopColor="#b85252" />
        </linearGradient>
        <linearGradient id="green" gradientUnits="userSpaceOnUse" x1="210" y1="880" x2="250" y2="942">
          <stop offset="0" stopColor="#006400" />
          <stop offset=".4" stopColor="#007a00" />
          <stop offset=".6" stopColor="#5fdc5f" />
          <stop offset=".75" stopColor="#0a850a" />
          <stop offset="1" stopColor="#003c00" />
        </linearGradient>
        <linearGradient id="greenEnd" gradientUnits="userSpaceOnUse" x1="80" y1="65" x2="115" y2="135">
          <stop offset="0" stopColor="#006400" />
          <stop offset=".55" stopColor="#38c038" />
          <stop offset="1" stopColor="#004400" />
        </linearGradient>
        <linearGradient id="steel" gradientUnits="userSpaceOnUse" x1="530" y1="165" x2="605" y2="280">
          <stop offset="0" stopColor="#8f8177" />
          <stop offset=".4" stopColor="#b3a499" />
          <stop offset=".68" stopColor="#fffaf5" />
          <stop offset=".85" stopColor="#b5a79c" />
          <stop offset="1" stopColor="#786c63" />
        </linearGradient>
        <linearGradient id="steel2" gradientUnits="userSpaceOnUse" x1="350" y1="1140" x2="405" y2="1240">
          <stop offset="0" stopColor="#a0938a" />
          <stop offset=".6" stopColor="#eee5dc" />
          <stop offset="1" stopColor="#8f8177" />
        </linearGradient>
        <linearGradient id="neck" gradientUnits="userSpaceOnUse" x1="350" y1="290" x2="400" y2="370">
          <stop offset="0" stopColor="#c25757" />
          <stop offset=".45" stopColor="#ee8c8c" />
          <stop offset="1" stopColor="#b14e4e" />
        </linearGradient>
        <radialGradient id="shine">
          <stop offset="0" stopColor="#ffb3b3" />
          <stop offset="1" stopColor="#ff9a9a" stopOpacity="0" />
        </radialGradient>
      </defs>

      <g transform="translate(1140 210) scale(.33333)" stroke="#3b3b3b" strokeWidth="2.500" strokeLinejoin="round">
        {/* clevis behind the arm */}
        <path d="M612 608q20-12 40-4 34 16 35 66-2 38-30 45l-40 8z" fill="url(#pinkEnd)" />
        <path d="M622 640q30 20 28 50-4 18-14 32" fill="none" />
        <path d="M528 600l39-17 55 17 3 14v104l-18-6v-64l-42 20v-20l-37-4z" fill="#d06868" />
        <path d="M565 642l60-38" fill="none" />
        <path d="M528 608l12-4 14 8-4 24-22-4z" fill="#6e1020" />
        <path d="M532 684l30-12 30-6 16 34-34 14-42 18z" fill="#a5a312" stroke="#55540a" />
        <path d="M536 682l22 40M585 668l16 34" stroke="#6d6c0c" />
        <path d="M528 736l80-24 34 12-86 36-28 4z" fill="#c76060" />
        <path d="M545 766l9-10 76-42q16 10 13 42-4 22-42 46l-50 28z" fill="#dd7474" />
        <path d="M556 760q-8 28-2 64" fill="none" />
        <circle cx="624" cy="755" r="17" fill="#7a1428" />
        <path d="M614 745l19 21M633 743l-18 23" stroke="#2d060d" />
        <path d="M387 694l55-34v120l-58-40z" fill="#c96464" />
        <path d="M387 694l50 22" fill="none" />
        <path d="M374 785q-2-48 36-52l36 8v100l-20 4q-44-8-52-60z" fill="#cf6969" />
        {/* rod */}
        <path d="M38 990L408 764q30-4 36 34v14L38 1062z" fill="url(#green)" stroke="#063a06" />
        <path d="M38 1072h5v46h-5z" fill="#006a68" stroke="none" />
        {/* lower hub */}
        <path d="M328 1130q4-26 36-40l190-120q40-24 86 20 34 50 22 106L455 1238q-34 18-72 4z" fill="url(#tealD)" />
        <path d="M328 1130q8-30 40-34 40 6 70 56 24 46 10 88" fill="none" />
        <path d="M308 1154l66-40q36 4 62 44 12 30 2 60l-92 60-36-90z" fill="url(#steel2)" stroke="none" />
        <path d="M308 1152l66-40M312 1168l76-46M316 1184l84-54M374 1112q36 4 62 44 12 30 2 60" fill="none" />
        {/* upper sleeve */}
        <path d="M447 112l-6 296q40 40 98 40 70 0 101-36l8-300z" fill="url(#tealV)" />
        <ellipse cx="548" cy="111" rx="100" ry="44" fill="#0c837f" />
        <ellipse cx="548" cy="111" rx="51" ry="23" fill="url(#bore)" />
        <path d="M457 320q-4-110 30-118 54 14 54 110 0 60-16 86" fill="#00726f" stroke="#5a4a4a" />
        {/* arm */}
        <path d="M488 208q28 24 34 100l6 180 33 500q-6 76-98 84-28 0-33-14l24-600q0-220 34-250z" fill="url(#tealArm)" stroke="none" />
        <path d="M455 400l-25 660q6 14 33 14 92-8 98-86l-36-590" fill="none" />
        <path d="M486 208L440 1060" stroke="#7c4b50" fill="none" />
        <path d="M495 212q24 22 27 90" stroke="#3fb5b0" strokeWidth="5" fill="none" />
        <path d="M421 1064q70 22 120-10 42-28 37-82" stroke="#6b4b50" fill="none" />
        {/* slide body */}
        <path d="M38 1200l40 18v35l-40 30z" fill="#b85454" stroke="none" />
        <path d="M38 1355l107-60 165-110q42 44 42 106-2 32-27 50L80 1505q-20 14-42 10z" fill="url(#pinkD)" />
        <path d="M210 1156l35-26 60 24 6 32-98 58z" fill="#d16969" />
        <path d="M210 1190l94-36M210 1208l96-54M212 1226l98-54" fill="none" />
        <path d="M38 1297l42-52 65 22 3 28-110 62z" fill="#d16969" />
        <path d="M42 1318l103-51M42 1334l104-55M42 1346l104-54" fill="none" />
        <path d="M42 1326l100-52M214 1216l90-50" stroke="#ffb0b0" strokeWidth="3" />
        <path d="M77 1155v86q54 6 64 32 8 18 40 18 30-4 30-40l-2-96z" fill="url(#pinkV)" />
        <ellipse cx="143" cy="1153" rx="66" ry="35" fill="#d67070" />
        <ellipse cx="143" cy="1149" rx="53" ry="27" fill="#cc6868" />
        <ellipse cx="142" cy="1148" rx="29" ry="17" fill="#ccc" />
        <path d="M116 1144q26-14 52 0M116 1150q26-12 52 0M119 1156q24-10 46 0M124 1161q18-8 36 0" fill="none" stroke="#222" strokeWidth="3" />
        <path d="M38 1358q50 20 54 88 0 44-20 64-16 10-34 5z" fill="#c45c5c" />
        <path d="M38 1396q24 12 24 42 0 30-24 42z" fill="#cfc4ba" />
      </g>

      <g transform="translate(730 760) scale(.33333)" stroke="#3b3b3b" strokeWidth="2.500" strokeLinejoin="round">
        <path d="M50 112q-4-20 16-31l60-33v84l-36 18q-34-2-40-38z" fill="url(#greenEnd)" stroke="#063a06" />
        <ellipse cx="70" cy="117" rx="18" ry="31" transform="rotate(-24 70 117)" fill="#086c08" stroke="#021f02" />
        <path d="M404 244q2-16 20-24l146-88h240L505 345q-12 8-24 5z" fill="url(#steel)" stroke="none" />
        <path d="M483 195l95-63M618 138L510 210l-27-15" fill="none" />
        <path d="M404 262q-2-36 20-40 32-2 60 34 32 44 24 84-8 14-28 10z" fill="#a99c92" />
        <path d="M414 264q-2-28 14-28 30 6 52 44 16 34 8 66" fill="none" />
        <path d="M415 257c34-8 62 34 57 80-42 14-77 45-107 101-35 72-105 122-185 122-60-2-92-40-92-90 2-80 92-160 187-160 35-2 95-25 140-53z" fill="url(#neck)" stroke="none" />
        <path d="M275 310c60 20 96 80 90 128-35 72-105 122-185 122-60-2-92-40-92-90 2-80 92-160 187-160z" fill="#c25b5b" stroke="none" />
        <ellipse cx="165" cy="385" rx="80" ry="42" transform="rotate(-42 165 385)" fill="url(#shine)" stroke="none" />
        <ellipse cx="300" cy="430" rx="90" ry="46" transform="rotate(-42 300 430)" fill="url(#shine)" stroke="none" />
        <ellipse cx="170" cy="485" rx="60" ry="32" transform="rotate(-20 170 485)" fill="url(#shine)" stroke="none" />
        <ellipse cx="130" cy="532" rx="40" ry="14" transform="rotate(30 130 532)" fill="url(#shine)" stroke="none" />
        <path d="M265 309c66 10 106 78 100 129M372 286c36 8 60 40 56 70M415 257c34-8 62 34 57 80" fill="none" />
      </g>

      {/* axis triad */}
      <g fontFamily="Liberation Sans, sans-serif" fontSize="9">
        <path d="M313 948V936" stroke="#7a7ae8" strokeWidth="3" />
        <path d="M310 940l3-9 3 9z" fill="#20209a" />
        <path d="M314 948l6-4" stroke="#7ad87a" strokeWidth="3" />
        <path d="M317 942l9-1-5 7z" fill="#087a08" />
        <path d="M314 948l5 1 9 7h-8z" fill="#e87070" />
        <text x="310" y="926" fill="#0000e0">Z</text>
        <text x="329" y="939" fill="#00d000">Y</text>
        <text x="332" y="960" fill="#e00000">X</text>
      </g>
    </svg>
  );
}

function CloseX({ className }: { className: string }) {
  return (
    <button aria-label="Close dialog" className={className}>
      <Svg box={11} className="size-[11px]"><path d="M.5.5l10 10M10.500.5l-10 10" stroke="currentColor" /></Svg>
    </button>
  );
}

type CheckProps = { id: string; checked?: boolean; disabled?: boolean; onChange?: () => void; children: ReactNode };

function Check({ id, checked = false, disabled, onChange, children }: CheckProps) {
  return (
    <div className={clsx('flex items-start gap-[3px]', disabled && 'text-[#6d6d6d]')}>
      <span className="relative flex size-[13px] shrink-0">
        <input
          id={id}
          type="checkbox"
          checked={checked}
          disabled={disabled}
          onChange={() => onChange?.()}
          className="size-[13px] appearance-none border border-[#333] bg-white disabled:border-[#ccc]"
        />
        {checked && (
          <svg viewBox="0 0 13 13" className="pointer-events-none absolute inset-0">
            <path d="M2.500 6.500l3 3 5-6" stroke="#333" strokeWidth="1.200" fill="none" />
          </svg>
        )}
      </span>
      <label htmlFor={id} className="leading-[13px] whitespace-nowrap">{children}</label>
    </div>
  );
}

const dialogButton = 'h-[21px] w-[73px] border border-[#adadad] bg-[#e1e1e1]';

function ConfigurationsDialog() {
  const [links, setLinks] = useState(false);
  const [suppression, setSuppression] = useState(false);
  return (
    <div role="dialog" aria-label="Configurations" className="absolute top-[51px] left-[495px] flex h-[578px] w-[378px] flex-col bg-[#f0f0f0] font-[Roboto,'Liberation_Sans',sans-serif] text-[11px] text-black shadow-[0_2px_10px_rgba(0,0,0,0.45)]">
      <div className="flex h-[30px] items-center justify-between bg-white pr-2.5 pl-2 font-['Open_Sans','Noto_Sans',sans-serif] text-[12px] text-[#999]">
        Configurations
        <CloseX className="text-[#999]" />
      </div>
      <div className="flex items-start justify-between pt-3 pr-[11px] pl-[11px]">
        <fieldset className="-mt-px h-20 w-[257px] border border-[#dcdcdc] pl-3">
          <legend className="-ml-2 px-1 leading-4">Active Configuration</legend>
          <p className="pt-1 leading-4">assy</p>
        </fieldset>
        <div className="flex flex-col gap-[7px]">
          <button className={dialogButton}>Close</button>
          <button className={dialogButton}>Apply</button>
        </div>
      </div>
      <div className="flex-1" />
      <fieldset className="mr-3 mb-2.5 ml-[9px] flex flex-col gap-[13px] border border-[#dcdcdc] pt-[7px] pb-1.5 pl-[11px]">
        <legend className="-ml-2 px-1 leading-4">Manager Properties</legend>
        <Check id="local-links" checked={links} onChange={() => setLinks(!links)}>Local configurations override external links.</Check>
        <Check id="local-suppression" checked={suppression} onChange={() => setSuppression(!suppression)}>Local suppression only configurations override external links.</Check>
      </fieldset>
    </div>
  );
}

function CreateDialog() {
  const [name, setName] = useState('assy exploded');
  const [exploded, setExploded] = useState(true);
  return (
    <div role="dialog" aria-label="Create Configuration" className="absolute top-32 left-[492px] w-[385px] border border-[#5877b8] bg-[#f0f0f0] font-[Lato,'Liberation_Sans',sans-serif] text-[11px] leading-[13px] text-black shadow-[0_4px_14px_rgba(0,0,0,0.5)]">
      <div className="flex h-[30px] items-center justify-between bg-white pr-2.5 pb-px pl-[7px] font-['Open_Sans','Noto_Sans',sans-serif] text-[12px]">
        Create Configuration
        <CloseX className="text-black" />
      </div>
      <div className="flex items-start justify-between pt-3 pr-5 pl-2.5">
        <fieldset className="h-[51px] w-[238px] border border-[#dcdcdc] pt-1 pl-[11px]">
          <legend className="-ml-[7px] px-1 leading-[13px]"><label htmlFor="config-name">Configuration Name</label></legend>
          <input
            id="config-name"
            value={name}
            onChange={(e) => setName(e.target.value)}
            className="block h-[23px] w-[215px] border border-[#7a7a7a] bg-white px-[3px] pb-0.5 outline-none"
          />
        </fieldset>
        <div className="flex flex-col gap-[7px]">
          <button className="h-[21px] w-[73px] border-2 border-[#0078d7] bg-[#e1e1e1]">OK</button>
          <button className={dialogButton}>Cancel</button>
        </div>
      </div>
      <fieldset className="mt-2.5 mr-3.5 ml-2.5 h-[178px] border border-[#dcdcdc] pt-[13px] pl-[11px]">
        <legend className="-ml-[7px] px-1">Properties</legend>
        <Check id="new-parts" disabled>
          New Parts/Assemblies added within the context of other<br />configurations are suppressed in this configuration.
        </Check>
        <div className="mt-[17px]"><Check id="track" disabled>Track suppression for Intellishapes in addition to Parts/Assemblies.</Check></div>
        <div className="mt-[25px]"><Check id="stores" disabled>Configuration stores position of Parts/Assemblies.</Check></div>
        <p className="mt-[18px] -ml-0.5 whitespace-nowrap">
          Note: Parameters that control suppression will override the suppression<br />information in configurations.
        </p>
      </fieldset>
      <fieldset className="mt-[18px] mr-3.5 mb-[13px] ml-2 h-[110px] border border-[#dcdcdc] pt-[13px] pl-[11px]">
        <legend className="-ml-[7px] px-1">Advanced Properties</legend>
        <Check id="exploded" checked={exploded} onChange={() => setExploded(!exploded)}>
          Exploded configuration (for free positional movement).
        </Check>
        <p className="mt-[15px] whitespace-nowrap">
          Note: Positional and projection constraints will not be solved while in<br />
          this configuration. Positions will be stored. &nbsp;This setting automatically<br />
          extends to all external links.
        </p>
      </fieldset>
    </div>
  );
}

/* ---------- bottom ---------- */

type StatusProps = { name: string; width?: string; menu?: boolean; active?: boolean; children?: ReactNode };

function StatusIcon({ name, width = 'w-6', menu, active, children }: StatusProps) {
  return (
    <button aria-label={name} className={clsx('flex h-[22px] items-center justify-center gap-1', width, active && 'bg-[#cfcfcf]')}>
      {children ?? <Glyph name={name} />}
      {menu && <Caret />}
    </button>
  );
}

function Combo({ label, value, className }: { label: string; value: string; className: string }) {
  return (
    <div className={clsx('relative flex h-5 items-center border border-[#c6c6c6] bg-white', className)}>
      <select aria-label={label} defaultValue={value} className="w-full appearance-none bg-transparent pl-px leading-4 outline-none">
        <option>{value}</option>
      </select>
      <Caret className="pointer-events-none absolute right-1 text-[#555]" />
    </div>
  );
}

function Footer() {
  return (
    <footer className="shrink-0 text-[11px] text-[#444]">
      <div className="flex h-8 flex-col bg-[#e5e5e5] pl-[7px]">
        <button className="flex h-[26px] w-[110px] items-center gap-[3px] pt-0.5 whitespace-nowrap"><Glyph name="catalog" />Catalog Browser</button>
        <div className="h-1.5 w-[104px] bg-[#d2d2d2]" />
      </div>
      <div className="flex h-6 items-center border-t border-[#cacaca] bg-[#f0f0f0] pl-0.5">
        <p className="flex-1 text-[11px]">For Help, press F1</p>
        <p className="w-[138px] whitespace-pre">View size: 1646 x  810</p>
        <p className="w-[88px] whitespace-nowrap">Units: in, deg</p>
        <StatusIcon name="zoomPage" />
        <StatusIcon name="zoomBox" menu width="w-[35px]" />
        <StatusIcon name="yellowCube" menu width="w-[35px]" />
        <StatusIcon name="shaded" menu width="w-[35px]"><ViewCube face="front" solid /></StatusIcon>
        <StatusIcon name="rotate" menu width="w-[35px]" />
        <StatusIcon name="wedge" active />
        <StatusIcon name="glasses" menu width="w-[33px]" />
        <StatusIcon name="wire" menu width="w-[33px]" />
        <StatusIcon name="stack" menu width="w-[33px]" />
        <StatusIcon name="cursorArrow" />
        <StatusIcon name="cursor" active />
        <StatusIcon name="cursorBox" />
        <Combo label="Selection filter" value="Any" className="w-[89px]" />
        <Combo label="Configuration" value="assy" className="ml-px w-[65px]" />
        <StatusIcon name="org" active />
      </div>
      <div className="flex h-0.5 bg-[#26262c]"><div className="ml-12 w-[344px] bg-[#d8d8d8]" /></div>
    </footer>
  );
}

export default function App() {
  return (
    <div className="flex h-screen flex-col overflow-hidden bg-[#e5e5e5] font-['Open_Sans','Noto_Sans',sans-serif] text-[12px]">
      <Header />
      <Ribbon />
      <DocumentTabs />
      <main className="flex min-h-0 flex-1">
        <SideToolbar />
        <ScenePanel />
        <div className="relative flex-1 overflow-hidden bg-linear-to-b from-[#4f77a7] via-[#9dafcb] via-50% to-white">
          <Model />
          <ConfigurationsDialog />
          <CreateDialog />
        </div>
      </main>
      <Footer />
    </div>
  );
}
